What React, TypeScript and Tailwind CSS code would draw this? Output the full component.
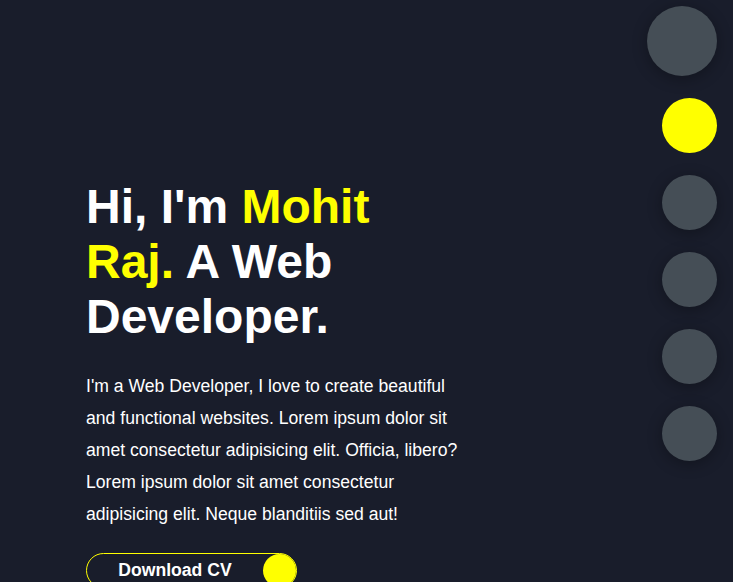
import React from "react";

const controls = [
    { id: "home", active: false, big: true },
    { id: "about", active: true, big: false },
    { id: "portfolio", active: false, big: false },
    { id: "blogs", active: false, big: false },
    { id: "contact", active: false, big: false },
    { id: "theme", active: false, big: false },
];

export default function App() {
    return (
        <div className="flex h-[582px] w-full overflow-hidden bg-[#191d2b] font-['Liberation_Sans',Arial,sans-serif] text-white">
            <main className="flex-1 pl-[86px] pt-[179px]">
                <div className="w-[380px]">
                    <h1 className="text-[48px] font-bold leading-[1.15]">
                        Hi, I'm <span className="text-[#ffff00]">Mohit Raj.</span> A Web Developer.
                    </h1>
                    <p className="mt-[25px] text-[17.6px] leading-[32px] text-white">
                        I'm a Web Developer, I love to create beautiful and functional websites. Lorem ipsum dolor sit amet
                        consectetur adipisicing elit. Officia, libero? Lorem ipsum dolor sit amet consectetur adipisicing elit.
                        Neque blanditiis sed aut!
                    </p>
                    <button className="mt-[23px] flex h-[35px] w-[211px] items-center rounded-full border border-[#ffff00] text-[17.6px] font-bold">
                        <span className="flex-1 text-center">Download CV</span>
                        <span className="h-[33px] w-[33px] rounded-full bg-[#ffff00]" />
                    </button>
                </div>
            </main>
            <nav className="flex flex-col items-end gap-[22px] pr-[16px] pt-[6px]">
                {controls.map((c) => (
                    <div
                        key={c.id}
                        className={
                            (c.big ? "h-[70px] w-[70px] " : "h-[55px] w-[55px] ") +
                            (c.active ? "bg-[#ffff00] " : "bg-[#454e56] shadow-[0_3px_15px_rgba(0,0,0,0.3)] ") +
                            "rounded-full"
                        }
                    />
                ))}
            </nav>
        </div>
    );
}
